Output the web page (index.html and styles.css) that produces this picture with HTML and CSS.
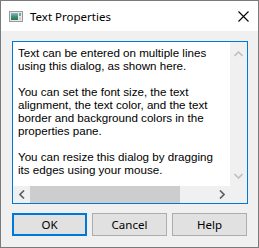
FILE: index.html
```html
<!DOCTYPE html>
<html lang="en">
<head>
    <meta charset="UTF-8">
    <title>Text Properties</title>
    <link rel="stylesheet" href="styles.css">
</head>
<body>

<div class="window">
    <!-- Barra de titulo -->
    <div class="titlebar">
        <svg class="app-icon" width="14" height="11" viewBox="0 0 14 11">
            <defs>
                <linearGradient id="pic" x1="0" y1="0" x2="0" y2="1">
                    <stop offset="0" stop-color="#8fb6c8"/>
                    <stop offset="0.5" stop-color="#3f8f78"/>
                    <stop offset="1" stop-color="#2f6f5a"/>
                </linearGradient>
            </defs>
            <rect x="0.5" y="0.5" width="13" height="10" fill="#e8e8e8" stroke="#9a9a9a"/>
            <rect x="2" y="2" width="7" height="7" fill="url(#pic)"/>
            <rect x="10" y="2" width="2" height="3" fill="#6fae8c"/>
            <rect x="10" y="6" width="2" height="3" fill="#c9d6d0"/>
        </svg>
        <span class="title">Text Properties</span>
        <svg class="close" width="11" height="11" viewBox="0 0 11 11">
            <path d="M0.5 0.5 L10.5 10.5 M10.5 0.5 L0.5 10.5" stroke="#000" stroke-width="1.1"/>
        </svg>
    </div>

    <div class="dialog">
        <!-- Caja de texto con barras de desplazamiento -->
        <div class="textbox">
            <div class="upper">
                <div class="text">
                    <p>Text can be entered on multiple lines<br>using this dialog, as shown here.</p>
                    <p>You can set the font size, the text<br>alignment, the text color, and the text<br>border and background colors in the<br>properties pane.</p>
                    <p>You can resize this dialog by dragging<br>its edges using your mouse.</p>
                </div>
                <div class="vscroll">
                    <svg width="9" height="6" viewBox="0 0 9 6"><path d="M0.5 5 L4.5 1 L8.5 5" fill="none" stroke="#c0c0c0" stroke-width="1.6"/></svg>
                    <svg width="9" height="6" viewBox="0 0 9 6"><path d="M0.5 1 L4.5 5 L8.5 1" fill="none" stroke="#c0c0c0" stroke-width="1.6"/></svg>
                </div>
            </div>
            <div class="hscroll">
                <div class="arrow">
                    <svg width="6" height="9" viewBox="0 0 6 9"><path d="M5 0.5 L1 4.5 L5 8.5" fill="none" stroke="#606060" stroke-width="1.7"/></svg>
                </div>
                <div class="thumb"></div>
                <div class="track"></div>
                <div class="arrow">
                    <svg width="6" height="9" viewBox="0 0 6 9"><path d="M1 0.5 L5 4.5 L1 8.5" fill="none" stroke="#606060" stroke-width="1.7"/></svg>
                </div>
                <div class="corner"></div>
            </div>
        </div>

        <div class="buttons">
            <button class="btn default">OK</button>
            <button class="btn">Cancel</button>
            <button class="btn">Help</button>
        </div>
    </div>
</div>

</body>
</html>
```

FILE: styles.css
```css
/* Estilo general */
body {
    margin: 0;
    background-color: #fff;
}
.window {
    width: 259px;
    height: 248px;
    box-sizing: border-box;
    border: 1px solid #7a7a7a;
    display: flex;
    flex-direction: column;
}
.titlebar {
    height: 30px;
    flex: none;
    background-color: #fff;
    display: flex;
    align-items: center;
    padding-left: 8px;
}
.app-icon {
    margin-top: 1px;
}
.title {
    margin-left: 7px;
    font-family: "Noto Sans", sans-serif;
    font-size: 11.5px;
    color: #000;
}
.close {
    margin-left: auto;
    margin-right: 9px;
}
.dialog {
    flex: 1;
    background-color: #f0f0f0;
    padding: 10px 10px 0 11px;
}
.textbox {
    width: 236px;
    height: 163px;
    box-sizing: border-box;
    border: 1px solid #0078d7; /* Borde azul con foco */
    display: flex;
    flex-direction: column;
}
.upper {
    height: 144px;
    flex: none;
    display: flex;
}
.text {
    width: 217px;
    flex: none;
    box-sizing: border-box;
    background-color: #fff;
    padding: 4px 0 0 5px;
    font-family: "Liberation Sans", Arial, sans-serif;
    font-size: 11.6px;
    line-height: 13px;
    color: #000;
    white-space: nowrap;
    overflow: hidden;
}
.text p {
    margin: 0 0 13px 0;
}
.vscroll {
    width: 17px;
    flex: none;
    box-sizing: border-box;
    background-color: #f0f0f0;
    display: flex;
    flex-direction: column;
    justify-content: space-between;
    align-items: center;
    padding: 9px 0 7px 0;
}
.hscroll {
    height: 17px;
    flex: none;
    background-color: #f0f0f0;
    display: flex;
}
.hscroll .arrow {
    width: 17px;
    flex: none;
    display: flex;
    align-items: center;
    justify-content: center;
}
.thumb {
    width: 150px;
    flex: none;
    background-color: #cdcdcd;
}
.track {
    flex: 1;
}
.corner {
    width: 17px;
    flex: none;
}
.buttons {
    display: flex;
    gap: 5px;
    margin-top: 9px;
}
.btn {
    width: 75px;
    height: 23px;
    box-sizing: border-box;
    border: 1px solid #adadad;
    background-color: #e1e1e1;
    font-family: "Noto Sans", sans-serif;
    font-size: 11.5px;
    color: #000;
    padding: 0;
}
.btn.default {
    border: 2px solid #0078d7;
}
```
